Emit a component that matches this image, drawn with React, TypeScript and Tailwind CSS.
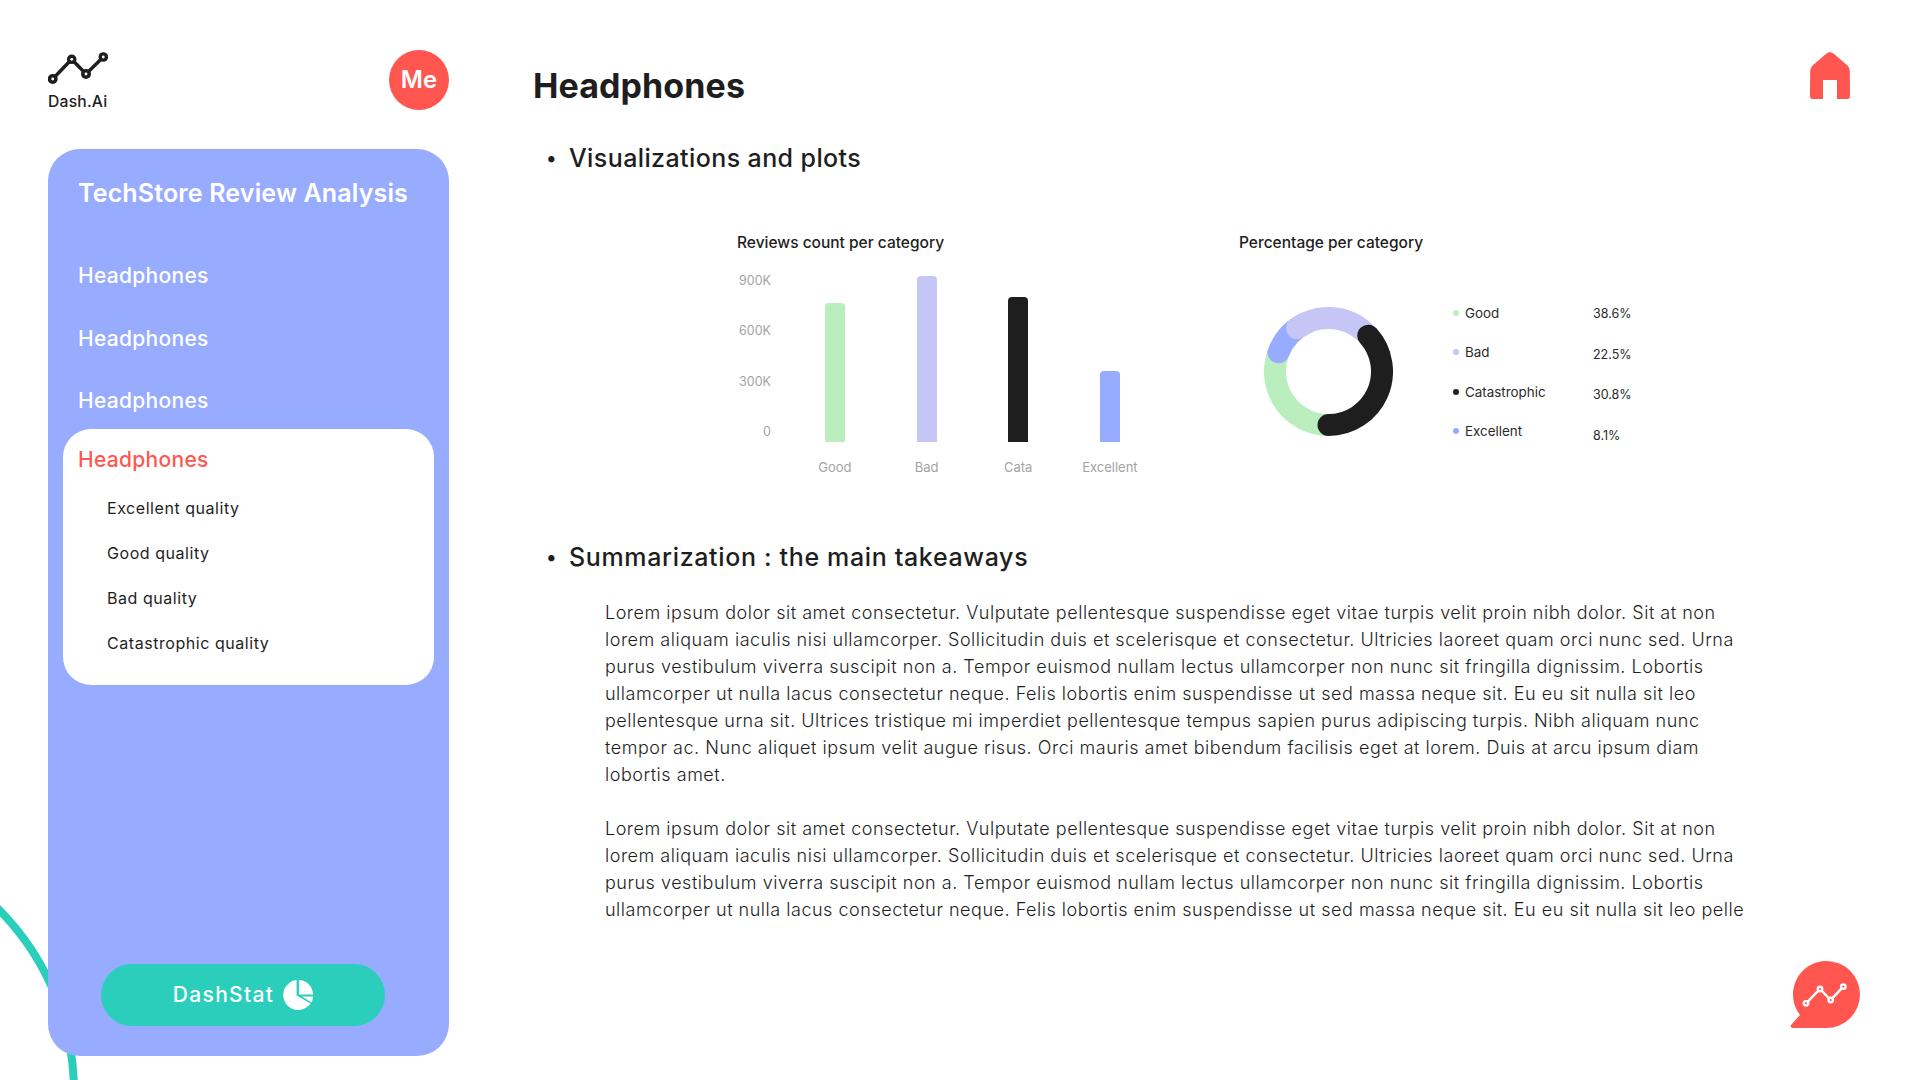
import React from "react";

const FONT = "font-['Inter','Liberation_Sans',sans-serif]";

const para1 = [
  "Lorem ipsum dolor sit amet consectetur. Vulputate pellentesque suspendisse eget vitae turpis velit proin nibh dolor. Sit at non",
  "lorem aliquam iaculis nisi ullamcorper. Sollicitudin duis et scelerisque et consectetur. Ultricies laoreet quam orci nunc sed. Urna",
  "purus vestibulum viverra suscipit non a. Tempor euismod nullam lectus ullamcorper non nunc sit fringilla dignissim. Lobortis",
  "ullamcorper ut nulla lacus consectetur neque. Felis lobortis enim suspendisse ut sed massa neque sit. Eu eu sit nulla sit leo",
  "pellentesque urna sit. Ultrices tristique mi imperdiet pellentesque tempus sapien purus adipiscing turpis. Nibh aliquam nunc",
  "tempor ac. Nunc aliquet ipsum velit augue risus. Orci mauris amet bibendum facilisis eget at lorem. Duis at arcu ipsum diam",
  "lobortis amet.",
];
const para2 = [
  para1[0],
  para1[1],
  para1[2],
  "ullamcorper ut nulla lacus consectetur neque. Felis lobortis enim suspendisse ut sed massa neque sit. Eu eu sit nulla sit leo pelle",
];

function Bar({ h, color, label }: { h: number; color: string; label: string }) {
  return (
    <div className="w-[91.7px] flex flex-col items-center">
      <div className="h-[166px] flex items-end">
        <div className="w-5 rounded-t-[4px]" style={{ height: h, background: color }} />
      </div>
      <div className="mt-[17px] text-[13px] leading-[16px] text-[#a3a3a3]">{label}</div>
    </div>
  );
}

function arc(from: number, to: number) {
  const R = 53.5;
  const p = (a: number) => {
    const t = (a * Math.PI) / 180;
    return `${64.5 + R * Math.sin(t)} ${64.5 - R * Math.cos(t)}`;
  };
  const large = to - from > 180 ? 1 : 0;
  return `M${p(from)}A${R} ${R} 0 ${large} 1 ${p(to)}`;
}

function Donut() {
  return (
    <svg viewBox="0 0 129 129" className="w-[129px] h-[129px] block" fill="none" strokeWidth="22">
      <path d={arc(180, 291)} stroke="#BAEEBF" />
      <path d={arc(291, 335)} stroke="#97ABFF" strokeLinecap="round" />
      <path d={arc(324, 400)} stroke="#C6C6F6" strokeLinecap="round" />
      <path d={arc(48, 180)} stroke="#1E1E1E" strokeLinecap="round" />
    </svg>
  );
}

const legend = [
  ["#BAEEBF", "Good"],
  ["#C6C6F6", "Bad"],
  ["#1E1E1E", "Catastrophic"],
  ["#97ABFF", "Excellent"],
];
const percents = ["38.6%", "22.5%", "30.8%", "8.1%"];

export default function App() {
  return (
    <div className={`relative w-[1920px] h-[1080px] overflow-hidden bg-white text-[#1e1e1e] ${FONT}`}>
      <div className="absolute left-[-448px] top-[829px] w-[526px] h-[526px] rounded-full border-[8px] border-[#2BCEBB]" />
      <div className="relative flex h-full">
        <aside className="w-[449px] shrink-0 pl-12 flex flex-col">
          <div className="h-[149px] pt-[50px] flex justify-between items-start">
            <div className="pt-[2px]">
              <svg viewBox="0 0 60 32" className="w-[60px] h-[32px] block">
                <polyline points="4.7,27 23.7,7.3 38,22 55.3,5" fill="none" stroke="#1e1e1e" strokeWidth="3.4" strokeLinejoin="round" />
                {[[4.7, 27, 5], [23.7, 7.3, 4.8], [38, 22, 5], [55.3, 5, 4.8]].map(([x, y, r], i) => (
                  <g key={i}>
                    <circle cx={x} cy={y} r={r} fill="#1e1e1e" />
                    <circle cx={x} cy={y} r={1.4} fill="#ffffff" />
                  </g>
                ))}
              </svg>
              <div className="mt-[8px] text-[15.7px] leading-[20px] font-medium tracking-[0.2px]">Dash.Ai</div>
            </div>
            <div className="w-[60px] h-[60px] rounded-full bg-[#FF5750] text-white flex items-center justify-center text-[24px] font-semibold">Me</div>
          </div>
          <div className="h-[907px] rounded-[32px] bg-[#97ABFF] text-white flex flex-col px-[15px] pb-[30px]">
            <h2 className="mt-[26px] pl-[15px] text-[25px] leading-[36px] font-semibold tracking-[0.15px] whitespace-nowrap">TechStore Review Analysis</h2>
            <div className="mt-[50px] pl-[15px] flex flex-col gap-[32.5px] text-[21px] leading-[30px] font-medium tracking-[0.3px]">
              <div>Headphones</div>
              <div>Headphones</div>
              <div>Headphones</div>
            </div>
            <div className="mt-[13px] h-[256px] rounded-[28px] bg-white px-[15px] pt-[16px]">
              <div className="text-[21px] leading-[30px] font-medium tracking-[0.3px] text-[#FF5750]">Headphones</div>
              <div className="mt-[21px] pl-[29px] flex flex-col gap-[21px] text-[16px] leading-[24px] text-[#1e1e1e] tracking-[0.55px]">
                <div>Excellent quality</div>
                <div>Good quality</div>
                <div>Bad quality</div>
                <div>Catastrophic quality</div>
              </div>
            </div>
            <div className="mt-auto ml-[38px] w-[284px] h-[62px] rounded-full bg-[#2BCEBB] flex items-center justify-center gap-[9px] text-[21px] font-medium tracking-[1.3px]">
              <span>DashStat</span>
              <svg viewBox="0 0 30 30" className="w-[30px] h-[30px]">
                <path d="M13.6 0.1A15 15 0 1 0 27.6 23.4L13.6 15.5Z" fill="#fff" />
                <path d="M16 0A14.5 14.5 0 0 1 30 14.5H16Z" fill="#fff" />
                <path d="M19 16.5H30A15 15 0 0 1 28.5 22.5Z" fill="#fff" />
              </svg>
            </div>
          </div>
        </aside>

        <main className="flex-1 pl-[84px] relative">
          <h1 className="mt-[61px] text-[34px] leading-[50px] font-bold tracking-[0.1px]">Headphones</h1>
          <div className="mt-[28px] flex items-center text-[25px] leading-[38px] font-medium tracking-[0.4px]">
            <span className="w-[36px] pl-[13px] text-[20px]">•</span>Visualizations and plots
          </div>

          <div className="mt-[55px] ml-[204px] flex h-[276px]">
            <div className="w-[502px]">
              <div className="text-[15.5px] leading-[22px] font-medium">Reviews count per category</div>
              <div className="mt-[22px] flex">
                <div className="w-[34px] -mt-[3px] flex flex-col gap-[34.4px] items-end text-[12.5px] leading-[16px] text-[#a3a3a3]">
                  <span>900K</span><span>600K</span><span>300K</span><span>0</span>
                </div>
                <div className="ml-[18px] flex">
                  <Bar h={139} color="#BAEEBF" label="Good" />
                  <Bar h={166} color="#C6C6F6" label="Bad" />
                  <Bar h={145} color="#1E1E1E" label="Cata" />
                  <Bar h={71} color="#97ABFF" label="Excellent" />
                </div>
              </div>
            </div>
            <div>
              <div className="text-[15.5px] leading-[22px] font-medium">Percentage per category</div>
              <div className="mt-[53px] flex">
                <div className="ml-[25px]"><Donut /></div>
                <div className="ml-[60px] w-[140px] -mt-[4px] flex flex-col gap-[19.3px] text-[13.4px] leading-[20px] text-[#2a2a2a]">
                  {legend.map(([c, n]) => (
                    <div key={n} className="flex items-center h-[20px]">
                      <span className="w-[6px] h-[6px] rounded-full mr-[6px]" style={{ background: c }} />
                      <span>{n}</span>
                    </div>
                  ))}
                </div>
                <div className="-mt-[3px] flex flex-col gap-[20.7px] text-[12.5px] leading-[20px] text-[#2a2a2a]">
                  {percents.map((p) => <div key={p}>{p}</div>)}
                </div>
              </div>
            </div>
          </div>

          <div className="mt-[30px] flex items-center text-[25px] leading-[38px] font-medium tracking-[0.65px]">
            <span className="w-[36px] pl-[13px] text-[20px]">•</span>Summarization : the main takeaways
          </div>
          <div className="mt-[23px] ml-[72px] text-[18px] leading-[27px] font-light tracking-[0.52px] text-[#1e1e1e] whitespace-nowrap">
            {para1.map((l, i) => <div key={i}>{l}</div>)}
            <div className="h-[27px]" />
            {para2.map((l, i) => <div key={i}>{l}</div>)}
          </div>
        </main>
      </div>

      <svg viewBox="0 0 40 47" className="absolute left-[1810px] top-[52px] w-[40px] h-[47px]">
        <path d="M16.5 1.5Q20 -1 23.5 1.5L37.5 13.5Q39.5 15.5 39.8 19L40 43Q40 47 38 47H27V28H13V47H2Q0 47 0 43L0.2 19Q0.5 15.5 2.5 13.5Z" fill="#FF5750" />
      </svg>

      <svg viewBox="0 0 70 68" className="absolute left-[1790px] top-[961px] w-[70px] h-[68px]">
        <path d="M36.5 0A33.5 33.5 0 0 1 36.5 67H3Q-1 66 1.5 63.5L10 54A33.5 33.5 0 0 1 36.5 0Z" fill="#FF5750" />
        <polyline points="16,42.3 30,28 40.7,39 53.3,25.7" fill="none" stroke="#fff" strokeWidth="2.5" />
        {[[16, 42.3], [30, 28], [40.7, 39], [53.3, 25.7]].map(([x, y], i) => (
          <g key={i}>
            <circle cx={x} cy={y} r={3.4} fill="#fff" />
            <circle cx={x} cy={y} r={1.1} fill="#FF5750" />
          </g>
        ))}
      </svg>
    </div>
  );
}
